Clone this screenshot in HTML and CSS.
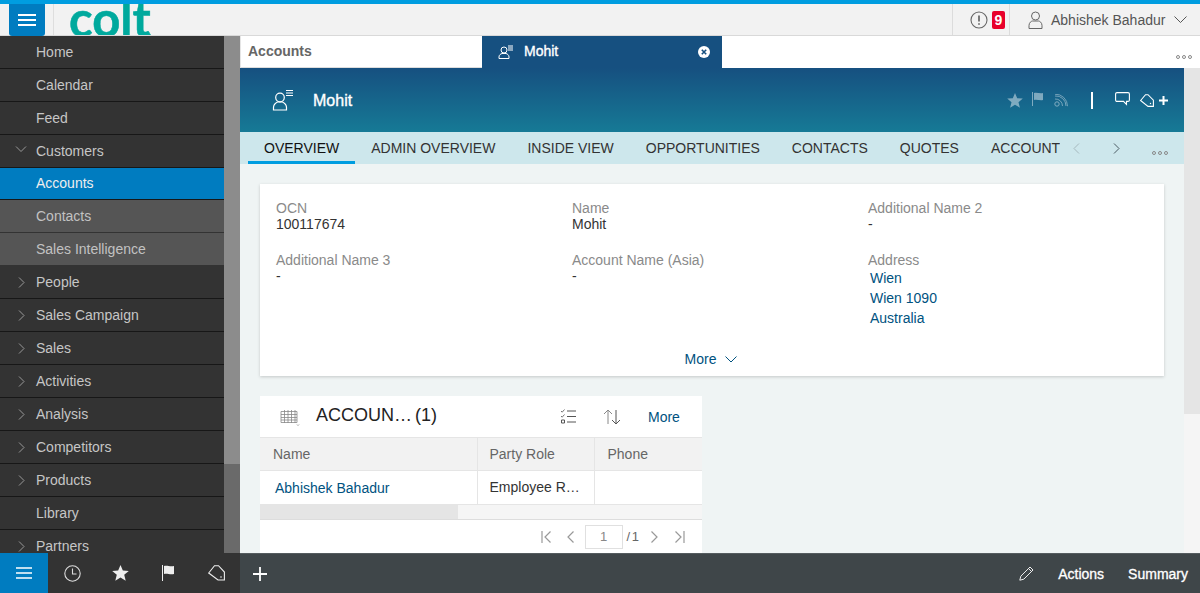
FILE: index.html
```html
<!DOCTYPE html>
<html lang="en">
<head>
<meta charset="utf-8">
<title>Mohit - Accounts</title>
<link rel="stylesheet" href="styles.css">
</head>
<body>
<div class="app">
  <header class="topbar">
    <button class="menu-btn" aria-label="Menu"><svg width="20" height="14" viewBox="0 0 20 14"><path d="M1 2h18M1 7h18M1 12h18" stroke="#fff" stroke-width="2.2"/></svg></button>
    <div class="logo"><span>colt</span></div>
    <div class="top-right">
      <div class="alerts">
        <svg width="18" height="18" viewBox="0 0 18 18" fill="none"><circle cx="9" cy="9" r="8" stroke="#666" stroke-width="1.1"/><path d="M9 4.500v6M9 12.200v1.600" stroke="#666" stroke-width="1.700"/></svg>
        <span class="badge">9</span>
      </div>
      <div class="user">
        <svg width="15" height="18" viewBox="0 0 15 18" fill="none"><circle cx="7.500" cy="5" r="4" stroke="#666"/><path d="M1 17.500v-3c0-3 2.500-4.500 3.500-4.500h6c1 0 3.500 1.500 3.500 4.500v3z" stroke="#666"/></svg>
        <span>Abhishek Bahadur</span>
        <svg width="13" height="7" viewBox="0 0 13 7" fill="none"><path d="M.5.5l6 6 6-6" stroke="#555"/></svg>
      </div>
    </div>
  </header>

  <div class="middle">
    <nav class="sidebar">
      <ul class="nav-list">
        <li class="nav-item">Home</li>
        <li class="nav-item">Calendar</li>
        <li class="nav-item">Feed</li>
        <li class="nav-item"><svg class="chev" width="12" height="7" viewBox="0 0 12 7" fill="none"><path d="M1 .5l5 5 5-5" stroke="#999"/></svg>Customers</li>
        <li class="nav-item active">Accounts</li>
        <li class="nav-item sub">Contacts</li>
        <li class="nav-item sub">Sales Intelligence</li>
        <li class="nav-item"><svg class="chev" width="12" height="11" viewBox="0 0 12 11" fill="none"><path d="M4 .5l5 5-5 5" stroke="#999"/></svg>People</li>
        <li class="nav-item"><svg class="chev" width="12" height="11" viewBox="0 0 12 11" fill="none"><path d="M4 .5l5 5-5 5" stroke="#999"/></svg>Sales Campaign</li>
        <li class="nav-item"><svg class="chev" width="12" height="11" viewBox="0 0 12 11" fill="none"><path d="M4 .5l5 5-5 5" stroke="#999"/></svg>Sales</li>
        <li class="nav-item"><svg class="chev" width="12" height="11" viewBox="0 0 12 11" fill="none"><path d="M4 .5l5 5-5 5" stroke="#999"/></svg>Activities</li>
        <li class="nav-item"><svg class="chev" width="12" height="11" viewBox="0 0 12 11" fill="none"><path d="M4 .5l5 5-5 5" stroke="#999"/></svg>Analysis</li>
        <li class="nav-item"><svg class="chev" width="12" height="11" viewBox="0 0 12 11" fill="none"><path d="M4 .5l5 5-5 5" stroke="#999"/></svg>Competitors</li>
        <li class="nav-item"><svg class="chev" width="12" height="11" viewBox="0 0 12 11" fill="none"><path d="M4 .5l5 5-5 5" stroke="#999"/></svg>Products</li>
        <li class="nav-item">Library</li>
        <li class="nav-item"><svg class="chev" width="12" height="11" viewBox="0 0 12 11" fill="none"><path d="M4 .5l5 5-5 5" stroke="#999"/></svg>Partners</li>
      </ul>
      <div class="side-scroll"><div class="side-thumb"></div></div>
    </nav>

    <main class="main">
      <div class="tabstrip">
        <div class="tab tab-list">Accounts</div>
        <div class="tab tab-current">
          <svg class="acct-small" width="16" height="14" viewBox="0 0 16 14" fill="none"><circle cx="6" cy="5" r="3" stroke="#fff"/><path d="M1 13.500v-1.500c0-2 1.500-3 3-3.500h4c1.500.5 3 1.500 3 3.500v1.500z" stroke="#fff"/><path d="M10 1h5M10 3h5M10 5h5" stroke="#fff"/></svg>
          <span class="tab-name">Mohit</span>
          <svg width="12" height="12" viewBox="0 0 12 12"><circle cx="6" cy="6" r="6" fill="#fff"/><path d="M3.800 3.800l4.400 4.400M8.200 3.800l-4.400 4.400" stroke="#165080" stroke-width="1.600"/></svg>
        </div>
        <div class="dots dots-top"><i></i><i></i><i></i></div>
      </div>

      <div class="workspace">
        <div class="page">
          <div class="obj-header">
            <svg class="obj-icon" width="22" height="22" viewBox="0 0 22 22" fill="none"><circle cx="8" cy="8.500" r="4.300" stroke="#fff" stroke-width="1.200"/><path d="M1.500 21v-2.500c0-3 2-4.500 4-5.500h5c2 1 4 2.500 4 5.500V21z" stroke="#fff" stroke-width="1.200"/><path d="M14 1.500h7M14 4h7M14 6.500h7" stroke="#fff" stroke-width="1.200"/></svg>
            <span class="obj-name">Mohit</span>
            <div class="obj-actions">
              <svg class="dim star-ico" width="16" height="15" viewBox="0 0 16 15"><path d="M8 0l2.200 5.200 5.600.4-4.300 3.600 1.400 5.500L8 11.700l-4.900 3 1.400-5.500L.2 5.600l5.600-.4z" fill="#fff"/></svg>
              <svg class="dim flag-ico" width="12" height="14" viewBox="0 0 12 14"><path d="M.5 0v14" stroke="#fff"/><path d="M2 1c3-1 6 1 9 0v7c-3 1-6-1-9 0z" fill="#fff"/></svg>
              <svg class="dim rss-ico" width="14" height="13" viewBox="0 0 14 13" fill="none"><circle cx="3" cy="10" r="2.200" stroke="#fff"/><path d="M1 5a7 7 0 0 1 7.500 7M1 2a10 10 0 0 1 11 10M1 .2a12 12 0 0 1 12.500 12" stroke="#fff" stroke-width=".9"/></svg>
              <span class="divider"></span>
              <svg class="chat-ico" width="15" height="14" viewBox="0 0 15 14" fill="none"><path d="M2 .6h11a1.400 1.400 0 0 1 1.400 1.400v6a1.400 1.400 0 0 1-1.400 1.400h-1.500v3l-3-3H2A1.400 1.400 0 0 1 .6 8V2A1.400 1.400 0 0 1 2 .6z" stroke="#fff" stroke-width="1.100"/></svg>
              <span class="tagplus">
                <svg width="14" height="13" viewBox="0 0 14 13" fill="none"><path d="M.6 6.500L5.500.7h2.500l5.400 5.500v6.200H8z" stroke="#fff" stroke-width="1.100"/><circle cx="10.500" cy="9.500" r=".7" fill="#fff"/></svg>
                <svg width="9" height="9" viewBox="0 0 9 9"><path d="M4.500 0v9M0 4.500h9" stroke="#fff" stroke-width="2"/></svg>
              </span>
            </div>
          </div>

          <div class="section-tabs">
            <span class="stab current">OVERVIEW</span>
            <span class="stab">ADMIN OVERVIEW</span>
            <span class="stab">INSIDE VIEW</span>
            <span class="stab">OPPORTUNITIES</span>
            <span class="stab">CONTACTS</span>
            <span class="stab">QUOTES</span>
            <span class="stab clipped">ACCOUNT</span>
            <div class="stab-ctrl">
              <svg width="7" height="11" viewBox="0 0 7 11" fill="none"><path d="M6 .5l-5 5 5 5" stroke="#a5b8bd"/></svg>
              <svg width="7" height="11" viewBox="0 0 7 11" fill="none"><path d="M1 .5l5 5-5 5" stroke="#4a5a62"/></svg>
            </div>
            <div class="dots dots-tab"><i></i><i></i><i></i></div>
          </div>

          <div class="content">
            <section class="card details">
              <div class="fields">
                <div class="field"><div class="label">OCN</div><div class="value">100117674</div></div>
                <div class="field"><div class="label">Name</div><div class="value">Mohit</div></div>
                <div class="field"><div class="label">Additional Name 2</div><div class="value">-</div></div>
                <div class="field"><div class="label">Additional Name 3</div><div class="value">-</div></div>
                <div class="field"><div class="label">Account Name (Asia)</div><div class="value">-</div></div>
                <div class="field"><div class="label">Address</div>
                  <div class="address"><a>Wien</a><a>Wien 1090</a><a>Australia</a></div>
                </div>
              </div>
              <div class="more-row"><a>More</a><svg width="12" height="7" viewBox="0 0 12 7" fill="none"><path d="M.5.500l5.500 5.500 5.500-5.500" stroke="#00527f"/></svg></div>
            </section>

            <section class="card team">
              <div class="team-head">
                <svg class="grid-ico" width="20" height="18" viewBox="0 0 20 18" fill="none"><path d="M1 3.500h16v11H1zM1 6.500h16M1 9.500h16M1 12h16M4.500 2v13M8 2v13M11.500 2v13M15 2v13" stroke="#888" stroke-width=".8"/><path d="M17 16.500l1 1 1-1" stroke="#777" stroke-width=".7"/></svg>
                <span class="team-title">ACCOUN…<span class="count">(1)</span></span>
                <svg class="check-ico" width="15" height="15" viewBox="0 0 15 15" fill="none"><path d="M0 2l1.200 1.200L3.500 .5M0 7l1.200 1.200L3.500 5.500" stroke="#777"/><path d="M.5 11h3v3h-3zM6 2h9M6 7.500h9M6 13h9" stroke="#555"/></svg>
                <svg class="sort-ico" width="18" height="16" viewBox="0 0 18 16" fill="none"><path d="M5 15V1M1 5l4-4 4 4" stroke="#888"/><path d="M13 1v14M9 11l4 4 4-4" stroke="#555"/></svg>
                <a class="team-more">More</a>
              </div>
              <table class="grid">
                <thead><tr><th class="c1">Name</th><th class="c2">Party Role</th><th class="c3">Phone</th></tr></thead>
                <tbody><tr><td class="c1"><a>Abhishek Bahadur</a></td><td class="c2">Employee R…</td><td class="c3"></td></tr></tbody>
              </table>
              <div class="h-scroll"><div class="h-thumb"></div></div>
              <div class="pager">
                <svg width="11" height="12" viewBox="0 0 11 12" fill="none"><path d="M1 0v12M9.500.5L4 6l5.500 5.500" stroke="#999" stroke-width="1.200"/></svg>
                <svg class="pg-prev" width="7" height="12" viewBox="0 0 7 12" fill="none"><path d="M6.500.5L1 6l5.500 5.500" stroke="#999" stroke-width="1.200"/></svg>
                <span class="pg-input">1</span>
                <span class="pg-total">/ 1</span>
                <svg class="pg-next" width="7" height="12" viewBox="0 0 7 12" fill="none"><path d="M.5.5L6 6l-5.500 5.500" stroke="#999" stroke-width="1.200"/></svg>
                <svg class="pg-last" width="11" height="12" viewBox="0 0 11 12" fill="none"><path d="M10 0v12M1.500.5L7 6l-5.500 5.500" stroke="#999" stroke-width="1.200"/></svg>
              </div>
            </section>
          </div>
        </div>
        <div class="page-scroll"><div class="page-thumb"></div></div>
      </div>
    </main>
  </div>

  <footer class="bottombar">
    <div class="bottom-left">
      <div class="bottom-menu"><svg width="16" height="12" viewBox="0 0 16 12"><path d="M0 1h16M0 6h16M0 11h16" stroke="#fff" stroke-width="1.500"/></svg></div>
      <div class="bottom-icons">
        <svg width="17" height="17" viewBox="0 0 17 17" fill="none"><circle cx="8.500" cy="8.500" r="7.700" stroke="#ddd" stroke-width="1.100"/><path d="M8.500 3.500v5.500h4" stroke="#ddd" stroke-width="1.100"/></svg>
        <svg class="bi-star" width="17" height="16" viewBox="0 0 16 15"><path d="M8 0l2.200 5.200 5.600.4-4.300 3.600 1.400 5.500L8 11.700l-4.900 3 1.400-5.500L.2 5.600l5.600-.4z" fill="#eee"/></svg>
        <svg class="bi-flag" width="13" height="16" viewBox="0 0 13 16"><path d="M.5 0v16" stroke="#eee"/><path d="M2 1c3-1 6 1 10 0v8c-4 1-7-1-10 0z" fill="#eee"/></svg>
        <svg class="bi-tag" width="17" height="16" viewBox="0 0 17 16" fill="none"><path d="M.7 8L6.500.7H10.500L16.400 7v8H10z" stroke="#eee" stroke-width="1.100"/><circle cx="13" cy="12" r=".8" fill="#eee"/></svg>
      </div>
    </div>
    <div class="bottom-right">
      <svg class="plus" width="14" height="14" viewBox="0 0 14 14"><path d="M7 0v14M0 7h14" stroke="#fff" stroke-width="1.800"/></svg>
      <svg class="pencil" width="15" height="15" viewBox="0 0 15 15" fill="none"><path d="M.8 14.200l1-4L11 1l3 3-9.200 9.200zM9.500 2.500l3 3" stroke="#eee"/></svg>
      <span class="foot-act actions">Actions</span>
      <span class="foot-act">Summary</span>
    </div>
  </footer>
</div>
</body>
</html>
```
FILE: styles.css
```css
* { box-sizing: border-box; }
html, body { margin: 0; padding: 0; height: 100%; overflow: hidden; }
body { font-family: "Liberation Sans", Arial, sans-serif; font-size: 14px; color: #333; }
svg { display: block; flex: none; }
a { color: #00527f; }

.app { width: 1200px; height: 593px; display: flex; flex-direction: column; overflow: hidden; }

/* top bar */
.topbar { height: 36px; flex: none; display: flex; align-items: stretch; background: #f2f2f2; border-top: 4px solid #009de0; border-bottom: 1px solid #d9d9d9; }
.menu-btn { width: 36px; height: 32px; margin-left: 9px; padding: 0; border: 0; border-radius: 0 0 3px 3px; background: #007cc0; display: flex; align-items: center; justify-content: center; }
.logo { margin-left: 8px; padding-left: 15px; border-left: 1px solid #dedede; width: 200px; height: 31px; overflow: hidden; }
.logo span { display: block; font-family: Lato, "Open Sans", sans-serif; font-weight: 700; font-size: 49px; line-height: 28px; color: #00a99d; -webkit-text-stroke: .5px #00a99d; }
.top-right { margin-left: auto; display: flex; align-items: stretch; }
.alerts { width: 58px; border-left: 1px solid #dcdcdc; border-right: 1px solid #dcdcdc; display: flex; align-items: center; padding-left: 17px; gap: 4px; }
.badge { width: 13px; height: 18px; border-radius: 2px; background: #e8002b; color: #fff; font-size: 14px; font-weight: 700; text-align: center; line-height: 18px; }
.user { width: 190px; display: flex; align-items: center; padding-left: 18px; color: #555; font-size: 14px; }
.user span { margin-left: 8px; margin-right: 9px; }

/* middle */
.middle { flex: 1; min-height: 0; display: flex; }

/* sidebar */
.sidebar { width: 240px; flex: none; display: flex; background: #333; overflow: hidden; }
.nav-list { width: 224px; margin: 0; padding: 0; list-style: none; overflow: hidden; }
.nav-item { position: relative; height: 33px; padding-left: 36px; line-height: 33px; font-size: 14px; color: #c6c6c6; border-bottom: 1px solid #171717; background: #333; }
.nav-item.active { background: #007cc0; color: #eee; height: 32px; line-height: 31px; }
.nav-item.sub { background: #555; border-bottom-color: #333; color: #c2c2c2; }
.chev { position: absolute; left: 15px; top: 11px; }
.side-scroll { width: 16px; background: #6a6a6a; }
.side-thumb { height: 428px; background: #8c8c8c; }

/* main */
.main { flex: 1; min-width: 0; display: flex; flex-direction: column; }
.tabstrip { height: 32px; flex: none; display: flex; background: #fff; position: relative; }
.tab { width: 240px; height: 32px; display: flex; align-items: center; }
.tab-list { width: 242px; font-weight: 700; font-size: 14px; line-height: 14px; color: #666; border-left: 1px solid #e5e5e5; border-bottom: 1px solid #ddd; padding-left: 7px; padding-bottom: 2px; }
.tab-current { background: #165080; color: #fff; padding-left: 16px; }
.tab-name { margin-left: 10px; font-size: 14px; -webkit-text-stroke: .35px #fff; width: 174px; margin-top: -2px; }
.dots { display: flex; gap: 2px; }
.dots i { width: 4px; height: 4px; border-radius: 50%; border: 1px solid #888; }
.dots-top { position: absolute; right: 8px; top: 19px; }

.workspace { flex: 1; min-height: 0; display: flex; }
.page { width: 944px; display: flex; flex-direction: column; background: #eff4f4; }
.page-scroll { width: 16px; background: #f5f5f5; }
.page-thumb { height: 346px; background: #e5e5e5; }

.obj-header { height: 64px; flex: none; display: flex; align-items: center; background: linear-gradient(#165080, #167a96); padding-left: 32px; color: #fff; }
.obj-name { margin-left: 19px; margin-top: 1px; font-size: 16px; -webkit-text-stroke: .35px #fff; }
.obj-actions { margin-left: auto; display: flex; align-items: center; padding-right: 16px; }
.obj-actions .dim { opacity: .45; }
.star-ico { margin-right: 9px; }
.flag-ico { margin-left: 0; margin-top: -2px; }
.rss-ico { margin-left: 10px; }
.divider { width: 2px; height: 17px; background: #fff; margin: 0 22px 0 23px; }
.chat-ico { margin-right: 10px; margin-top: -2px; }
.tagplus { display: flex; align-items: center; gap: 5px; }

.section-tabs { height: 32px; flex: none; display: flex; background: #cde7ec; padding-left: 8px; position: relative; }
.stab { padding: 0 16px; line-height: 33px; color: #333; font-size: 14px; white-space: nowrap; height: 32px; }
.stab.current { color: #111; border-bottom: 3px solid #009de0; }
.stab.clipped { width: 85px; padding-right: 0; overflow: hidden; }
.stab-ctrl { margin-left: 13px; display: flex; align-items: center; gap: 33px; }
.dots-tab { position: absolute; right: 16px; top: 19px; }

.content { flex: 1; min-height: 0; padding: 20px 20px 0; overflow: hidden; }
.card { background: #fff; }
.details { height: 192px; box-shadow: 0 1px 3px rgba(0,0,0,.18); padding: 16px 16px 0; display: flex; flex-direction: column; }
.fields { display: grid; grid-template-columns: repeat(3, 296px); grid-template-rows: 52px auto; }
.label { color: #8a8a8a; font-size: 14px; line-height: 16px; }
.value { color: #333; font-size: 14px; line-height: 16px; }
.address { margin-left: 2px; }
.address a { display: block; line-height: 20px; font-size: 14px; }
.more-row { display: flex; justify-content: center; align-items: center; gap: 9px; margin-top: 23px; margin-left: -2px; line-height: 16px; }

.team { width: 442px; height: 157px; margin-top: 20px; display: flex; flex-direction: column; }
.team-head { height: 41px; flex: none; display: flex; align-items: center; padding-left: 20px; }
.team-title { margin-left: 16px; font-size: 18px; color: #222; width: 245px; margin-top: -3px; }
.count { margin-left: 3px; }
.sort-ico { margin-left: 27px; }
.team-more { margin-left: 27px; }
.grid { width: 442px; border-collapse: collapse; table-layout: fixed; font-size: 14px; }
.grid th { height: 33px; background: #f2f2f2; border: 1px solid #e5e5e5; border-left-width: 0; font-weight: 400; text-align: left; color: #666; padding: 0 12px; }
.grid td { height: 34px; border-bottom: 1px solid #e5e5e5; border-right: 1px solid #e5e5e5; padding: 0 12px 2px; white-space: nowrap; overflow: hidden; }
.grid th.c1, .grid td.c1 { width: 217px; padding-right: 0; }
.grid th.c1 { padding-left: 13px; }
.grid td.c1 { padding-left: 15px; }
.grid th.c2 { width: 117px; }
.grid th.c3 { padding-left: 13px; }
.grid th.c3, .grid td.c3 { border-right: 0; }
.grid td.c1 a { position: relative; top: 1px; }
.h-scroll { height: 15px; flex: none; background: #f5f5f5; border-bottom: 1px solid #ddd; }
.h-thumb { width: 198px; height: 14px; background: #e5e5e5; }
.pager { flex: 1; display: flex; align-items: center; justify-content: flex-end; padding-right: 17px; color: #666; font-size: 13px; }
.pg-prev { margin-left: 15px; }
.pg-input { width: 38px; height: 24px; margin-left: 11px; border: 1px solid #e0e0e0; text-align: center; line-height: 22px; color: #888; }
.pg-total { margin-left: 4px; word-spacing: -2px; }
.pg-next { margin-left: 12px; }
.pg-last { margin-left: 16px; }

/* bottom bar */
.bottombar { height: 40px; flex: none; display: flex; background: #3f4649; }
.bottom-left { width: 240px; flex: none; background: #333; display: flex; }
.bottom-menu { width: 48px; background: #007cc0; display: flex; align-items: center; justify-content: center; }
.bottom-icons { flex: 1; display: flex; align-items: center; padding-left: 16px; }
.bi-star { margin-left: 31px; }
.bi-flag { margin-left: 33px; }
.bi-tag { margin-left: 33px; }
.bottom-right { flex: 1; display: flex; align-items: center; padding-right: 12px; border-top: 1px solid #555c5f; }
.plus { margin-left: 13px; }
.pencil { margin-left: auto; }
.foot-act { color: #fff; font-size: 14px; -webkit-text-stroke: .3px #fff; margin-left: 24px; }
```
